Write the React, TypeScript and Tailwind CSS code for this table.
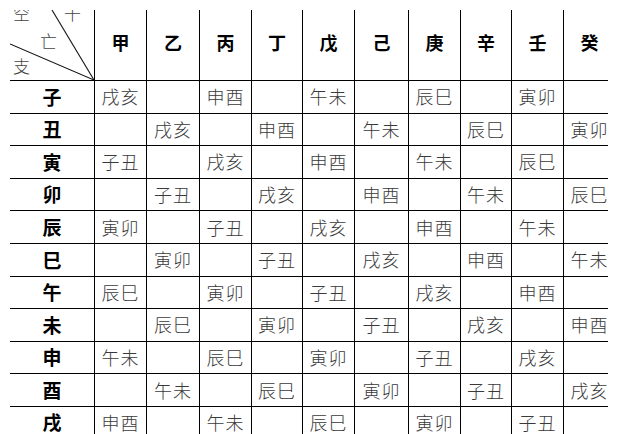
const stems = ["甲", "乙", "丙", "丁", "戊", "己", "庚", "辛", "壬", "癸"];
const branches = ["子", "丑", "寅", "卯", "辰", "巳", "午", "未", "申", "酉", "戌", "亥"];
const voids = ["戌亥", "申酉", "午未", "辰巳", "寅卯", "子丑"];

// which void pair sits in column `col` for branch row `row`
function cellText(row: number, col: number) {
  if ((row + col) % 2 !== 0) return "";
  const k = (((col - row) / 2) % 6 + 6) % 6;
  // row 0: col 0 -> 戌亥, col 2 -> 申酉 ...
  return voids[(k + 6) % 6];
}

const font = { fontFamily: '"Noto Sans CJK SC", "Noto Sans CJK TC", sans-serif' };

export default function App() {
  return (
    <div className="relative h-[434px] w-[618px] overflow-hidden bg-white" style={font}>
      <div className="ml-[10px] mt-[10px] w-[598px] overflow-hidden">
        <div className="grid w-[606px] grid-cols-[85px_52px_53px_52px_51px_52px_54px_52px_51px_52px_52px] grid-rows-[71px_repeat(12,32.6px)]">
          {/* corner cell with diagonals */}
          <div className="relative overflow-hidden border-b border-r border-black text-[17px] font-light leading-none text-[#444]">
            <svg className="absolute inset-0" width="85" height="71" viewBox="0 0 85 71">
              <line x1="42" y1="0" x2="84" y2="70" stroke="#111" strokeWidth="1.1" />
              <line x1="0" y1="34" x2="84" y2="70" stroke="#111" strokeWidth="1.1" />
            </svg>
            <span className="absolute left-[3px] top-[-6px]">空</span>
            <span className="absolute left-[54px] top-[-6px]">干</span>
            <span className="absolute left-[30px] top-[22px]">亡</span>
            <span className="absolute left-[3px] top-[47px]">支</span>
          </div>
          {stems.map((s) => (
            <div
              key={s}
              className="flex items-center justify-center border-b border-r border-black pb-[6px] text-[18px] font-bold text-black"
            >
              {s}
            </div>
          ))}
          {branches.map((b, row) => (
            <div key={b} className="contents">
              <div className="flex items-center justify-center border-b border-r border-black text-[19px] font-bold text-black">
                {b}
              </div>
              {stems.map((s, col) => (
                <div
                  key={s}
                  className="flex items-center justify-center whitespace-nowrap border-b border-r border-black text-[18px] font-light tracking-[1px] text-[#3a3a3a]"
                >
                  {cellText(row, col)}
                </div>
              ))}
            </div>
          ))}
        </div>
      </div>
    </div>
  );
}
